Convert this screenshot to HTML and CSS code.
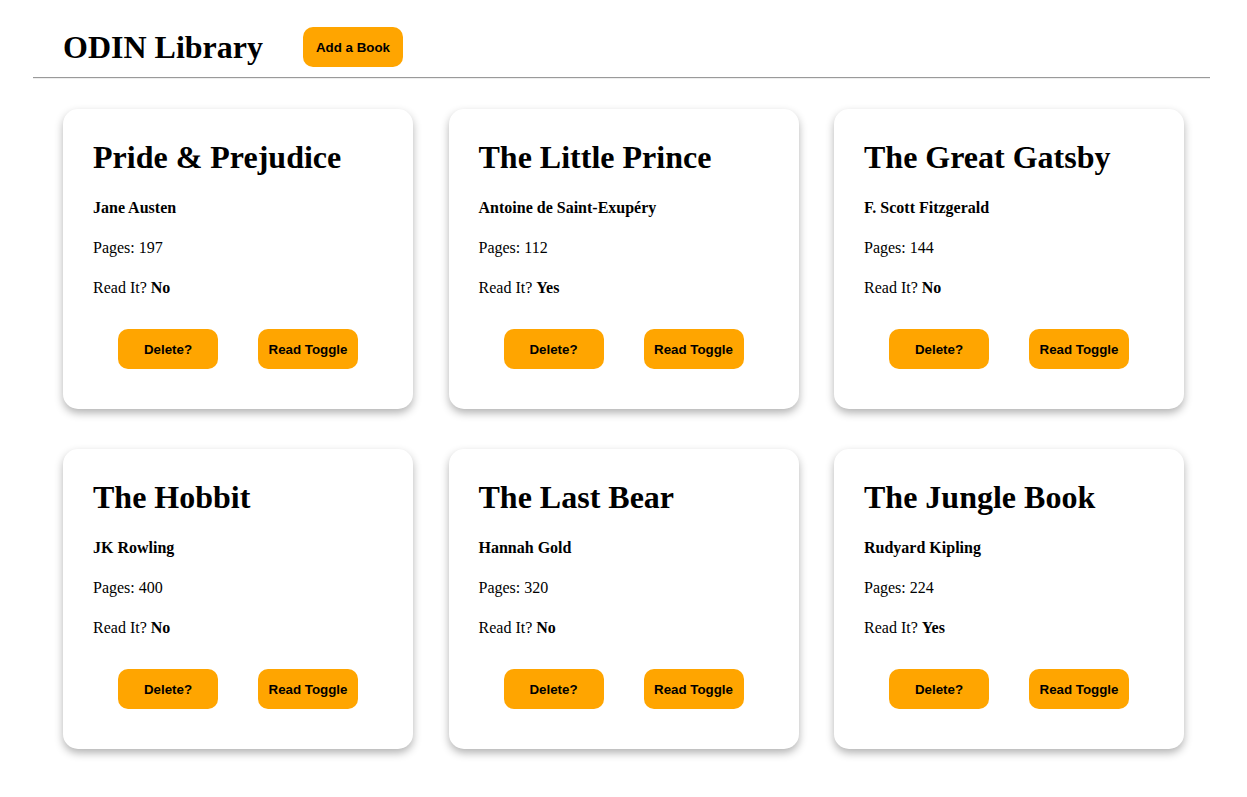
FILE: index.html
```html
<!DOCTYPE html>
<html lang="en">
<head>
<meta charset="utf-8">
<title>ODIN Library</title>
<link rel="stylesheet" href="styles.css">
</head>
<body>
<header class="header">
  <h1 class="brand">ODIN Library</h1>
  <button class="btn btn-add">Add a Book</button>
</header>
<hr class="divider">
<main class="library">
  <article class="card">
    <h2 class="title">Pride &amp; Prejudice</h2>
    <p class="author">Jane Austen</p>
    <p class="info">Pages: 197</p>
    <p class="info">Read It? <b>No</b></p>
    <div class="actions"><button class="btn">Delete?</button><button class="btn">Read Toggle</button></div>
  </article>
  <article class="card">
    <h2 class="title">The Little Prince</h2>
    <p class="author">Antoine de Saint-Exupéry</p>
    <p class="info">Pages: 112</p>
    <p class="info">Read It? <b>Yes</b></p>
    <div class="actions"><button class="btn">Delete?</button><button class="btn">Read Toggle</button></div>
  </article>
  <article class="card">
    <h2 class="title">The Great Gatsby</h2>
    <p class="author">F. Scott Fitzgerald</p>
    <p class="info">Pages: 144</p>
    <p class="info">Read It? <b>No</b></p>
    <div class="actions"><button class="btn">Delete?</button><button class="btn">Read Toggle</button></div>
  </article>
  <article class="card">
    <h2 class="title">The Hobbit</h2>
    <p class="author">JK Rowling</p>
    <p class="info">Pages: 400</p>
    <p class="info">Read It? <b>No</b></p>
    <div class="actions"><button class="btn">Delete?</button><button class="btn">Read Toggle</button></div>
  </article>
  <article class="card">
    <h2 class="title">The Last Bear</h2>
    <p class="author">Hannah Gold</p>
    <p class="info">Pages: 320</p>
    <p class="info">Read It? <b>No</b></p>
    <div class="actions"><button class="btn">Delete?</button><button class="btn">Read Toggle</button></div>
  </article>
  <article class="card">
    <h2 class="title">The Jungle Book</h2>
    <p class="author">Rudyard Kipling</p>
    <p class="info">Pages: 224</p>
    <p class="info">Read It? <b>Yes</b></p>
    <div class="actions"><button class="btn">Delete?</button><button class="btn">Read Toggle</button></div>
  </article>
</main>
</body>
</html>
```

FILE: styles.css
```css
* { box-sizing: border-box; }

html, body {
  margin: 0;
  padding: 0;
  background: #ffffff;
  color: #000000;
  font-family: "Liberation Serif", "Times New Roman", serif;
  font-size: 16px;
}

.header {
  display: flex;
  align-items: center;
  gap: 40px;
  padding: 27px 0 0 63px;
  height: 67px;
}

.brand {
  margin: 0;
  font-size: 32px;
  font-weight: bold;
  line-height: 36px;
}

.btn {
  width: 100px;
  height: 40px;
  border: none;
  border-radius: 10px;
  background: #ffa500;
  color: #000;
  font-family: "Liberation Sans", Arial, sans-serif;
  font-size: 13.333px;
  font-weight: bold;
  padding: 0;
  cursor: pointer;
}

.divider {
  margin: 10px 37px 0 33px;
  border: none;
  border-top: 1px solid #9a9a9a;
  border-bottom: 1px solid #eeeeee;
  height: 0;
}

.library {
  display: grid;
  grid-template-columns: repeat(3, 350px);
  column-gap: 35.5px;
  row-gap: 40px;
  padding: 30px 0 40px 63px;
}

.card {
  height: 300px;
  background: #ffffff;
  border-radius: 15px;
  box-shadow: 0 4px 8px rgba(0, 0, 0, 0.3);
  padding: 30px 30px 40px 30px;
  display: flex;
  flex-direction: column;
}

.title {
  margin: 0;
  font-size: 32px;
  line-height: 36px;
  font-weight: bold;
}

.author {
  margin: 24px 0 0 0;
  font-weight: bold;
  line-height: 18px;
}

.info {
  margin: 22px 0 0 0;
  line-height: 18px;
}

.actions {
  margin-top: auto;
  display: flex;
  justify-content: center;
  gap: 40px;
}
```
